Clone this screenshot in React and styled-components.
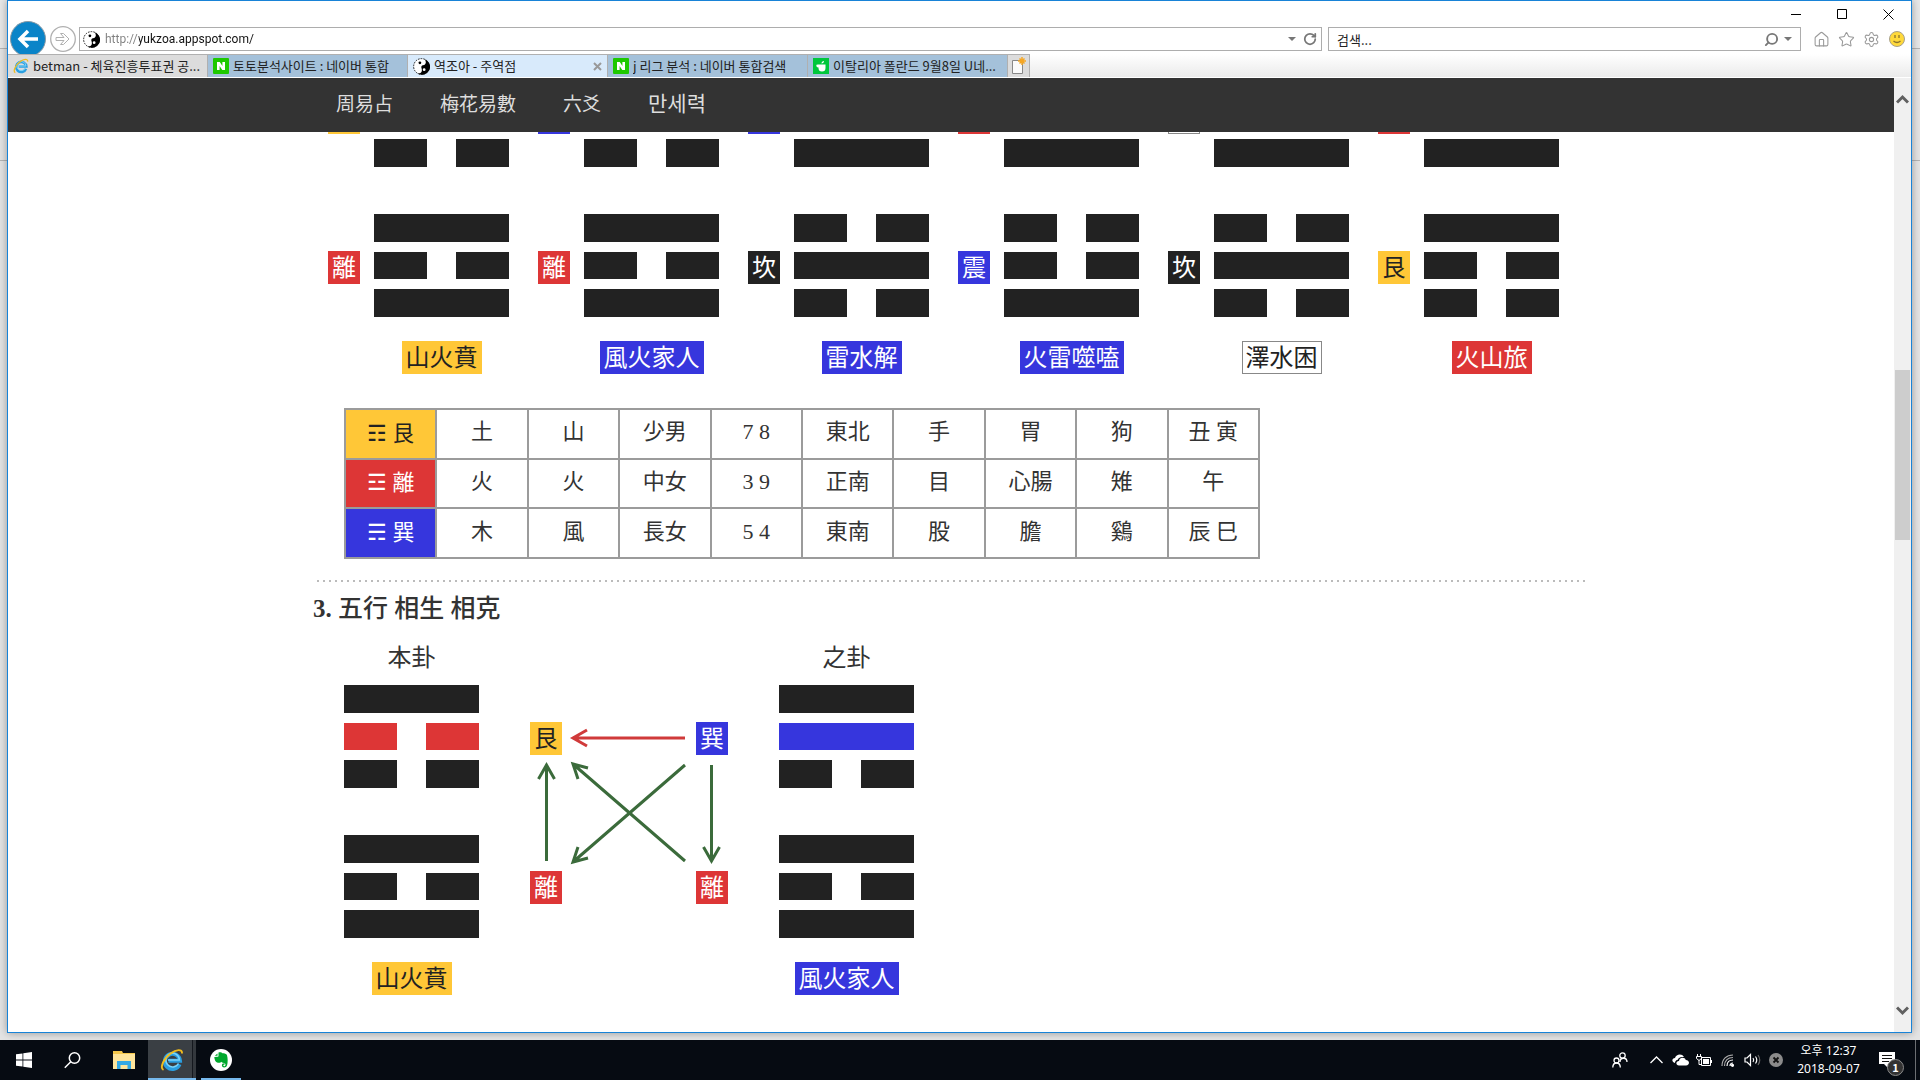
import styled, { createGlobalStyle } from "styled-components";
import { Home, RotateCw, Search, Settings, Star } from "lucide-react";

const COLORS = {
  yellow: "#ffc737",
  red: "#dd3636",
  blue: "#3636dd",
  black: "#222222",
  green: "#3b6b3b",
  line: "#9b9b9b",
};

const TRIGRAMS = {
  艮: { lines: [1, 0, 0], tone: "yellow" },
  離: { lines: [1, 0, 1], tone: "red" },
  坎: { lines: [0, 1, 0], tone: "black" },
  震: { lines: [0, 0, 1], tone: "blue" },
  巽: { lines: [1, 1, 0], tone: "blue" },
  兌: { lines: [0, 1, 1], tone: "white" },
};

const HEXAGRAMS = [
  { name: "山火賁", upper: "艮", lower: "離", tone: "yellow" },
  { name: "風火家人", upper: "巽", lower: "離", tone: "blue" },
  { name: "雷水解", upper: "震", lower: "坎", tone: "blue" },
  { name: "火雷噬嗑", upper: "離", lower: "震", tone: "blue" },
  { name: "澤水困", upper: "兌", lower: "坎", tone: "white" },
  { name: "火山旅", upper: "離", lower: "艮", tone: "red" },
];

const ROWS = [
  { tone: "yellow", head: "艮", sign: "☶", cells: ["土", "山", "少男", "7 8", "東北", "手", "胃", "狗", "丑 寅"] },
  { tone: "red", head: "離", sign: "☲", cells: ["火", "火", "中女", "3 9", "正南", "目", "心腸", "雉", "午"] },
  { tone: "blue", head: "巽", sign: "☴", cells: ["木", "風", "長女", "5 4", "東南", "股", "膽", "鷄", "辰 巳"] },
];

const GlobalStyle = createGlobalStyle`
  * {
    box-sizing: border-box;
  }

  body {
    margin: 0;
    background: #e6e6e6;
  }

  button,
  input {
    font: inherit;
    color: inherit;
    padding: 0;
    border: none;
    background: none;
  }
`;

const Desktop = styled.div`
  display: flex;
  flex-direction: column;
  height: 100vh;
  overflow: hidden;
  font-family: "Noto Sans CJK KR", sans-serif;
  font-size: 13px;
  color: #222;
`;

const Workspace = styled.div`
  flex: 1;
  min-height: 0;
  display: flex;
  padding: 0 8px 7px 7px;
  background: linear-gradient(
    #e8e8e8 48px,
    #b4b4b4 48px,
    #b4b4b4 49px,
    #e4e4e4 49px,
    #e4e4e4 160px,
    #b4b4b4 160px,
    #b4b4b4 161px,
    #e4e4e4 161px
  );
`;

const Window = styled.div`
  flex: 1;
  min-width: 0;
  display: flex;
  flex-direction: column;
  background: #fff;
  border: 1px solid #1883d7;
  box-shadow: 0 0 8px rgba(0, 0, 0, 0.35);
`;

// Browser chrome
const TitleBar = styled.div`
  display: flex;
  justify-content: flex-end;
  height: 26px;
`;

const WindowButton = styled.button`
  display: grid;
  place-items: center;
  width: 46px;
`;

const AddressRow = styled.div`
  display: flex;
  align-items: center;
  height: 24px;
  padding: 0 6px 0 2px;
  margin-bottom: 3px;
`;

const BackButton = styled.button`
  width: 36px;
  height: 36px;
  margin-right: 4px;

  svg {
    display: block;
  }
`;

const ForwardButton = styled.button`
  width: 26px;
  height: 26px;
  margin-right: 3px;

  svg {
    display: block;
  }
`;

const Field = styled.label`
  display: flex;
  align-items: center;
  gap: 5px;
  flex: ${(p) => (p.$width ? "none" : 1)};
  width: ${(p) => (p.$width ? `${p.$width}px` : "auto")};
  height: 24px;
  padding: ${(p) => (p.$width ? "0 8px" : "0 3px")};
  margin-right: ${(p) => (p.$width ? 12 : 6)}px;
  border: 1px solid #adadad;
  color: #777;
`;

const TextInput = styled.input`
  flex: 1;
  min-width: 0;
  height: 20px;
  outline: none;
  color: #222;

  &::placeholder {
    color: #222;
    opacity: 1;
  }
`;

// protocol is greyed, host stays dark
const UrlInput = styled(TextInput)`
  font-family: Roboto, sans-serif;
  font-size: 12px;
  background: linear-gradient(to right, #808080 34px, #111 34px);
  background-clip: text;
  -webkit-text-fill-color: transparent;
`;

const IconButton = styled.button`
  display: grid;
  place-items: center;
  width: 17px;
  height: 20px;
  color: #999;
`;

const Tools = styled.div`
  display: flex;
  gap: 8px;
`;

const TabRow = styled.div`
  position: relative;
  display: flex;
  height: 24px;
  border-bottom: 1px solid #fff;
  background: linear-gradient(#fff, #ebebeb);
`;

const Tab = styled.button`
  display: flex;
  align-items: center;
  gap: 4px;
  width: 200px;
  padding: 0 5px;
  border-top: 1px solid #b0b0b0;
  border-right: 1px solid #b0b0b0;
  background: ${(p) => p.$bg};
  text-align: left;
  white-space: nowrap;

  svg {
    flex: none;
  }
`;

const TabTitle = styled.span`
  flex: 1;
  overflow: hidden;
  line-height: 20px;
`;

const NewTab = styled(Tab)`
  width: 22px;
  padding: 0 2px;
`;

// Page
const Viewport = styled.div`
  flex: 1;
  min-height: 0;
  display: flex;
`;

const Page = styled.div`
  flex: 1;
  min-width: 0;
  overflow: hidden;
  font-family: "Liberation Serif", "Noto Sans CJK KR", serif;
  color: #333;
`;

const Nav = styled.nav`
  position: relative;
  z-index: 1;
  height: 54px;
  background: #333;
`;

const Container = styled.div`
  max-width: 1276px;
  margin: 0 auto;
`;

const NavLink = styled.a`
  display: inline-block;
  padding: 0 24px 0 23px;
  font-size: ${(p) => (p.$hangul ? 21 : 19)}px;
  line-height: 52px;
  color: #ddd;
  text-decoration: none;
`;

const Chart = styled.div`
  display: grid;
  grid-template-columns: repeat(6, 210px);
  margin-top: -68px;
  padding-left: 3px;
`;

const ChartItem = styled.div`
  display: grid;
  grid-template-columns: 32px 135px;
  column-gap: 14px;
  row-gap: 47px;
  align-items: center;
  padding-left: 12px;
`;

const Trigram = styled.div`
  display: grid;
  grid-template-rows: repeat(3, 1fr);
  row-gap: 10px;
  width: 135px;
  height: 103px;
`;

const Line = styled.div`
  background: ${(p) =>
    p.$solid
      ? p.$color
      : `linear-gradient(to right, ${p.$color} 53px, transparent 53px, transparent 82px, ${p.$color} 82px)`};
`;

const Label = styled.span`
  display: block;
  width: fit-content;
  min-width: 32px;
  height: 33px;
  padding: 2px 4px 0;
  font-size: 24px;
  line-height: 31px;
  white-space: nowrap;
  color: ${(p) => (p.$tone === "yellow" || p.$tone === "white" ? "#222" : "#fff")};
  background: ${(p) => COLORS[p.$tone] || "#fff"};
  box-shadow: ${(p) => (p.$tone === "white" ? "inset 0 0 0 1px #888" : "none")};
`;

const Sign = styled.div`
  padding-top: 3px;
`;

const ChartName = styled.div`
  grid-column: 2;
  justify-self: center;
  margin-top: -23px;
`;

const Table = styled.table`
  width: 916px;
  height: 151px;
  margin: 34px 0 21px 31px;
  table-layout: fixed;
  border-collapse: collapse;
  font-size: 22px;
  text-align: center;
`;

const Cell = styled.td`
  padding: 0 0 3px;
  border: 2px solid ${COLORS.line};
  line-height: 30px;
`;

const HeadCell = styled(Cell).attrs({ as: "th", scope: "row" })`
  padding: 0;
  font-weight: 400;
  color: ${(p) => (p.$tone === "yellow" ? "#222" : "#fff")};
  background: ${(p) => COLORS[p.$tone]};
`;

const Divider = styled.hr`
  height: 2px;
  margin: 0 3px 0 4px;
  border: none;
  background: repeating-linear-gradient(to right, #bbb 0 2px, transparent 2px 6px);
`;

const Title = styled.h3`
  margin: 9px 0 15px;
  font-size: 25px;
  font-weight: 500;
  line-height: 36px;
`;

const Diagram = styled.div`
  display: flex;
  gap: 51px;
  padding-left: 31px;
`;

const Hexagram = styled.div`
  display: flex;
  flex-direction: column;
  align-items: center;
  width: 135px;
`;

const HexagramHead = styled.div`
  margin-bottom: 11px;
  font-size: 24px;
  line-height: 32px;
`;

const Trigrams = styled.div`
  display: grid;
  row-gap: 47px;
  margin-bottom: 24px;
`;

const Relations = styled.div`
  position: relative;
  display: grid;
  grid-template-columns: auto auto;
  justify-content: space-between;
  align-content: space-between;
  width: 198px;
  height: 182px;
  margin-top: 80px;
`;

const Arrows = styled.svg`
  position: absolute;
  inset: 0;
  fill: none;
  stroke: ${COLORS.green};
  stroke-width: 3;
`;

const Scrollbar = styled.div`
  display: flex;
  flex-direction: column;
  align-items: center;
  justify-content: space-between;
  width: 17px;
  padding: 16px 0;
  background: #f0f0f0;
  color: #606060;
`;

const Thumb = styled.div`
  width: 15px;
  height: 170px;
  margin: 265px 0 auto;
  background: #cdcdcd;
`;

// Taskbar
const Taskbar = styled.footer`
  display: flex;
  height: 40px;
  padding-left: 4px;
  background: #060b12;
  color: #fff;
`;

const TaskButton = styled.button`
  display: grid;
  place-items: center;
  width: ${(p) => p.$width || 48}px;
  margin-right: ${(p) => p.$gap || 0}px;
  background: ${(p) =>
    p.$active ? "linear-gradient(to right, #3a3f44 44px, #14181e 44px, #14181e 45px, #33383d 45px)" : "none"};
  box-shadow: ${(p) => (p.$running ? "inset 0 -2px #76b9ed" : "none")};
`;

const Tray = styled.div`
  display: flex;
  align-items: center;
  margin-left: auto;
`;

const TrayButton = styled.button`
  display: grid;
  place-items: center;
  width: 24px;
  height: 40px;
  margin-right: ${(p) => p.$gap || 0}px;
`;

const Clock = styled.div`
  width: 81px;
  text-align: center;
  font-family: "Noto Sans", "Noto Sans CJK KR", sans-serif;
  font-size: 12px;
  line-height: 18px;
`;

const Notice = styled.button`
  position: relative;
  display: grid;
  place-items: center;
  width: 36px;
  height: 40px;
  margin-right: 10px;
`;

const Badge = styled.span`
  position: absolute;
  right: 1px;
  bottom: 4px;
  width: 17px;
  height: 17px;
  border: 1px solid #8a8a8a;
  border-radius: 50%;
  background: #333;
  font-size: 11px;
  font-weight: 700;
  line-height: 15px;
  text-align: center;
`;

const ShowDesktop = styled.div`
  width: 5px;
  height: 40px;
  border-left: 1px solid #6b6e72;
`;

const YinYang = () => (
  <svg width="17" height="17" viewBox="0 0 16 16">
    <circle cx="8" cy="8" r="7.4" fill="#fff" stroke="#000" strokeWidth="0.8" strokeDasharray="1.6 1" />
    <path d="M11 1.2A7.5 7.5 0 1 1 4.5 14.600C8 15 9 12.500 8 9.500C7.300 7.500 8.500 6.500 10.500 6.500C12.500 5.500 12.500 3 11 1.200Z" fill="#000" />
    <circle cx="6.500" cy="4.500" r="1.300" fill="#000" />
    <circle cx="10.500" cy="11" r="1.300" fill="#fff" />
  </svg>
);

const Naver = () => (
  <svg width="16" height="16" viewBox="0 0 16 16">
    <rect width="16" height="16" rx="1" fill="#1ec800" />
    <path d="M4 12V4h2.800l2.600 4V4H12v8H9.300L6.600 8v4z" fill="#fff" />
  </svg>
);

const Cafe = () => (
  <svg width="16" height="16" viewBox="0 0 16 16">
    <rect width="16" height="16" fill="#00c73c" />
    <path d="M5 6.500h7.500V10a3.500 3.500 0 0 1-7 0V9.500C3.500 9.500 3 8 3.500 6.800z" fill="#fff" />
    <path d="M8.500 5.500c0-1.500 1-2.500 2.500-2.500 0 1.500-1 2.500-2.500 2.500z" fill="#fff" />
  </svg>
);

const Explorer = ({ size }) => (
  <svg width={size} height={size} viewBox="0 0 24 24" fill="none">
    <path d="M19.500 16.200A7.600 7.600 0 1 1 20 12.800H8.500" stroke="#2b9fe0" strokeWidth="4" />
    <path d="M18.500 15.500A6.800 6.800 0 1 1 19.400 12H8" stroke="#79d4fa" strokeWidth="1.500" />
    <path d="M3.500 22C-.5 20 3.500 10.500 10.500 5.500C16 1.500 22.500.5 22 5.500" stroke="#f0bb1c" strokeWidth="1.900" />
  </svg>
);

const Folder = () => (
  <svg width="22" height="18" viewBox="0 0 22 18">
    <path d="M0 0h9l1 2h12v16H0z" fill="#f5c84c" />
    <path d="M0 3h22v15H0z" fill="#ffe59b" />
    <path d="M4 18v-8h14v8h-3.500v-4h-7v4z" fill="#35a9e4" />
  </svg>
);

const Evernote = () => (
  <svg width="22" height="22" viewBox="0 0 22 22">
    <circle cx="11" cy="11" r="11" fill="#fff" />
    <path d="M8.500 3.500C10 2.800 12 3.500 12.500 4.300c2 0 4 .4 4.500 2 .9 3 .9 7.200.1 9.900-.8 2.900-5 3-5.200.4-.1-1.700 1-2.500 2.600-2.300v1.400c-1-.1-1.300.3-1.200.9.200 1 2 .9 2.200-.6.100-1-.4-2-1.500-2-1.700-.1-2-.2-2.600-1.200-.6 1-2.700 1.300-4.300.7C5.400 12.800 4.400 10.500 4.300 8l3.200-.2c.8 0 1-.4 1-1zM7.500 4.500v2.200H4.800z" fill="#00a82d" />
  </svg>
);

function Lines({ name, changed, color }) {
  return (
    <Trigram>
      {TRIGRAMS[name].lines.map((solid, i) => (
        <Line key={i} $solid={solid} $color={i === changed ? color : COLORS.black} />
      ))}
    </Trigram>
  );
}

function TrigramTag({ name }) {
  return <Label $tone={TRIGRAMS[name].tone}>{name}</Label>;
}

function HexagramColumn({ head, name, upper, lower, tone, color }) {
  return (
    <Hexagram>
      <HexagramHead>{head}</HexagramHead>
      <Trigrams>
        <Lines name={upper} changed={1} color={color} />
        <Lines name={lower} />
      </Trigrams>
      <Label $tone={tone}>{name}</Label>
    </Hexagram>
  );
}

function Chrome() {
  return (
    <>
      <TitleBar>
        <WindowButton aria-label="최소화">
          <svg width="10" height="10" stroke="#000"><path d="M0 5.500h10" /></svg>
        </WindowButton>
        <WindowButton aria-label="최대화">
          <svg width="10" height="10" fill="none" stroke="#000"><path d="M.5.5h9v9h-9z" /></svg>
        </WindowButton>
        <WindowButton aria-label="닫기">
          <svg width="11" height="11" stroke="#000"><path d="M.5.5l10 10M10.500.5l-10 10" /></svg>
        </WindowButton>
      </TitleBar>
      <AddressRow>
        <BackButton aria-label="뒤로">
          <svg width="36" height="36" fill="none">
            <circle cx="18" cy="18" r="17.500" fill="#0a84c8" stroke="#8a9aa5" />
            <path d="M28 18H11M18 10l-8 8 8 8" stroke="#fff" strokeWidth="3.500" />
          </svg>
        </BackButton>
        <ForwardButton aria-label="앞으로">
          <svg width="26" height="26" fill="none" stroke="#b0b0b0">
            <circle cx="13" cy="13" r="12.300" strokeWidth="1.300" />
            <path d="M6 11.500h8l-3.500-4h3l5.500 5.500-5.500 5.500h-3l3.500-4H6z" />
          </svg>
        </ForwardButton>
        <Field>
          <YinYang />
          <UrlInput aria-label="주소" defaultValue="http://yukzoa.appspot.com/" />
          <svg width="8" height="4"><path d="M0 0h8L4 4z" fill="#777" /></svg>
          <IconButton aria-label="새로 고침"><RotateCw size={14} strokeWidth={3} color="#777" /></IconButton>
        </Field>
        <Field $width={473}>
          <TextInput aria-label="검색" placeholder="검색..." />
          <Search size={15} strokeWidth={3} color="#777" transform="scale(-1 1)" />
          <svg width="8" height="4"><path d="M0 0h8L4 4z" fill="#777" /></svg>
        </Field>
        <Tools>
          <IconButton aria-label="홈"><Home size={17} strokeWidth={1.5} /></IconButton>
          <IconButton aria-label="즐겨찾기"><Star size={17} strokeWidth={1.5} /></IconButton>
          <IconButton aria-label="도구"><Settings size={17} strokeWidth={1.5} /></IconButton>
          <IconButton aria-label="의견">
            <svg width="16" height="16" fill="none">
              <circle cx="8" cy="8" r="7.500" fill="#ffd93b" stroke="#a8a08a" />
              <path d="M6 4v3M10 4v3M4.500 10q3.500 3 7 0" stroke="#8a7430" strokeWidth="1.300" />
            </svg>
          </IconButton>
        </Tools>
      </AddressRow>
      <TabRow>
        <Tab $bg="#dcdcdc"><Explorer size={16} /><TabTitle>betman - 체육진흥투표권 공...</TabTitle></Tab>
        <Tab $bg="#a4c1da"><Naver /><TabTitle>토토분석사이트 : 네이버 통합</TabTitle></Tab>
        <Tab $bg="#d8eafb">
          <YinYang />
          <TabTitle>역조아 - 주역점</TabTitle>
          <svg width="9" height="9" stroke="#999" strokeWidth="2"><path d="M1 1l7 7M8 1l-7 7" /></svg>
        </Tab>
        <Tab $bg="#a4c1da"><Naver /><TabTitle>j 리그 분석 : 네이버 통합검색</TabTitle></Tab>
        <Tab $bg="#a4c1da"><Cafe /><TabTitle>이탈리아 폴란드 9월8일 U네...</TabTitle></Tab>
        <NewTab $bg="#dcdcdc" aria-label="새 탭">
          <svg width="16" height="18" fill="none">
            <path d="M2.500 3.500h10v13h-10z" fill="#fafafa" stroke="#888" />
            <path d="M12 0v8M8 4h8M9.500 1.500l5 5M14.500 1.500l-5 5" stroke="#f5a623" strokeWidth="1.500" />
          </svg>
        </NewTab>
      </TabRow>
    </>
  );
}

function Arrow({ d, color }) {
  return <path d={d} stroke={color} />;
}

function App() {
  return (
    <Desktop>
      <GlobalStyle />
      <Workspace>
        <Window>
          <Chrome />
          <Viewport>
            <Page>
              <Nav>
                <Container>
                  <NavLink href="#">周易占</NavLink>
                  <NavLink href="#">梅花易數</NavLink>
                  <NavLink href="#">六爻</NavLink>
                  <NavLink href="#" $hangul>만세력</NavLink>
                </Container>
              </Nav>
              <Container>
                <Chart>
                  {HEXAGRAMS.map(({ name, upper, lower, tone }) => (
                    <ChartItem key={name}>
                      <Sign><Label $tone={TRIGRAMS[upper].tone} /></Sign>
                      <Lines name={upper} />
                      <Sign><TrigramTag name={lower} /></Sign>
                      <Lines name={lower} />
                      <ChartName><Label $tone={tone}>{name}</Label></ChartName>
                    </ChartItem>
                  ))}
                </Chart>
                <Table>
                  <tbody>
                    {ROWS.map((row) => (
                      <tr key={row.head}>
                        <HeadCell $tone={row.tone}>{row.sign} {row.head}</HeadCell>
                        {row.cells.map((cell, i) => (
                          <Cell key={i}>{cell}</Cell>
                        ))}
                      </tr>
                    ))}
                  </tbody>
                </Table>
                <Divider />
                <Title><b>3.</b> 五行 相生 相克</Title>
                <Diagram>
                  <HexagramColumn head="本卦" name="山火賁" upper="艮" lower="離" tone="yellow" color={COLORS.red} />
                  <Relations>
                    <TrigramTag name="艮" />
                    <TrigramTag name="巽" />
                    <TrigramTag name="離" />
                    <TrigramTag name="離" />
                    <Arrows width="198" height="182">
                      <Arrow d="M155 16H43M57 8L43 16l14 8" color="#d03a3a" />
                      <Arrow d="M16.500 139V43M8.500 57l8-14 8 14" />
                      <Arrow d="M181.500 43v96M173.500 125l8 14 8-14" />
                      <Arrow d="M155 139L43 42M58 46L43 42l5 15" />
                      <Arrow d="M155 43L43 140M58 136l-15 4 5-15" />
                    </Arrows>
                  </Relations>
                  <HexagramColumn head="之卦" name="風火家人" upper="巽" lower="離" tone="blue" color={COLORS.blue} />
                </Diagram>
              </Container>
            </Page>
            <Scrollbar>
              <svg width="13" height="11" fill="none" stroke="currentColor" strokeWidth="3"><path d="M1 8.500l5.500-5.500L12 8.500" /></svg>
              <Thumb />
              <svg width="13" height="11" fill="none" stroke="currentColor" strokeWidth="3"><path d="M1 2.500l5.500 5.500L12 2.500" /></svg>
            </Scrollbar>
          </Viewport>
        </Window>
      </Workspace>
      <Taskbar>
        <TaskButton $width={40} aria-label="시작">
          <svg width="16" height="16" fill="#fff">
            <path d="M0 2.300L6.500 1.400V7.600H0zM7.300 1.300L16 0v7.600H7.300zM0 8.400h6.500v6.200L0 13.700zM7.300 8.400H16V16l-8.700-1.300z" />
          </svg>
        </TaskButton>
        <TaskButton $width={56} aria-label="검색">
          <svg width="17" height="17" fill="none" stroke="#fff" strokeWidth="1.500">
            <circle cx="10.500" cy="6" r="5.200" />
            <path d="M6.800 9.700L.8 15.800" />
          </svg>
        </TaskButton>
        <TaskButton aria-label="파일 탐색기"><Folder /></TaskButton>
        <TaskButton $active $running $gap={5} aria-label="Internet Explorer"><Explorer size={24} /></TaskButton>
        <TaskButton $width={40} $running aria-label="Evernote"><Evernote /></TaskButton>
        <Tray>
          <TrayButton $gap={12} aria-label="피플">
            <svg width="16" height="16" fill="none" stroke="#fff" strokeWidth="1.300">
              <circle cx="10.500" cy="3.500" r="2.700" />
              <path d="M8 10c0-5 7-5 7 0" />
              <circle cx="4.500" cy="8.500" r="2.500" />
              <path d="M.8 15.500c0-6 7.500-6 7.500 0" />
            </svg>
          </TrayButton>
          <TrayButton aria-label="숨겨진 아이콘">
            <svg width="13" height="8" fill="none" stroke="#fff" strokeWidth="1.300"><path d="M.5 7l6-6 6 6" /></svg>
          </TrayButton>
          <TrayButton aria-label="OneDrive">
            <svg width="17" height="12" fill="#fff">
              <path d="M3 9C-1 8 0 4 3 4c1-4 7-5 9-1-4-.5-6 1-6.500 3C3.500 6 3 8 3 9z" />
              <path d="M7 11.500c-3.500 0-3.500-4.500 0-4.500.5-4 6-4 6.800-1C18 6 18 11.500 14 11.500z" />
            </svg>
          </TrayButton>
          <TrayButton aria-label="배터리">
            <svg width="17" height="13" fill="none" stroke="#fff">
              <path d="M5.500 3.500h9v8h-9zM15.500 6v3M1.500 0v2M4.500 0v2M.5 2.500h5v2l-2.500 2-2.500-2zM3 6v4.500h2.500" />
              <path d="M7 5h6v5H7z" fill="#fff" stroke="none" />
            </svg>
          </TrayButton>
          <TrayButton aria-label="네트워크">
            <svg width="14" height="14" fill="none" stroke="#fff" strokeWidth="1.200">
              <path d="M9 13c0-2 1-3 3-3M6 13c0-4 2.500-6 6-6" />
              <path d="M3.500 13c0-5.500 3.500-8.500 8.500-8.500M1 13C1 6 5.500 2 12 2" stroke="#aaa" />
              <circle cx="11.500" cy="12.300" r="1" fill="#fff" />
            </svg>
          </TrayButton>
          <TrayButton aria-label="볼륨">
            <svg width="17" height="14" fill="none" stroke="#fff" strokeWidth="1.200">
              <path d="M1 5h2l3.500-3.500v11L3 9H1zM9 5q1.500 2 0 4M11.500 3.500q2.500 3.500 0 7" />
              <path d="M14 2q3.500 5 0 10" stroke="#666" />
            </svg>
          </TrayButton>
          <TrayButton aria-label="상태">
            <svg width="14" height="14">
              <circle cx="7" cy="7" r="7" fill="#8b8b8b" />
              <path d="M4.500 4.500l5 5M9.500 4.500l-5 5" stroke="#111" strokeWidth="1.800" />
            </svg>
          </TrayButton>
          <Clock>
            <div>오후 12:37</div>
            <div>2018-09-07</div>
          </Clock>
          <Notice aria-label="알림">
            <svg width="16" height="17">
              <path d="M0 0h16v12H9v4l-4-4H0z" fill="#fff" />
              <path d="M3 3.500h10M3 6.500h10M3 9.500h7" stroke="#111" />
            </svg>
            <Badge>1</Badge>
          </Notice>
          <ShowDesktop />
        </Tray>
      </Taskbar>
    </Desktop>
  );
}

export default App;
